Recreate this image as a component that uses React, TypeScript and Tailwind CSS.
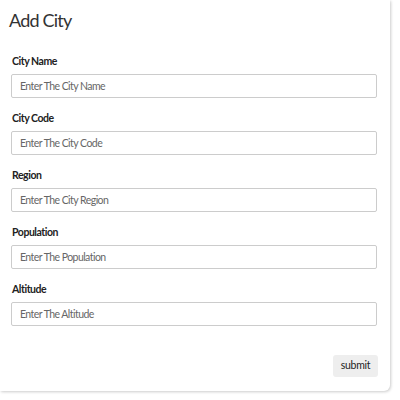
import React from 'react';

const fields = [
  { label: 'City Name', placeholder: 'Enter The City Name' },
  { label: 'City Code', placeholder: 'Enter The City Code' },
  { label: 'Region', placeholder: 'Enter The City Region' },
  { label: 'Population', placeholder: 'Enter The Population' },
  { label: 'Altitude', placeholder: 'Enter The Altitude' },
];

export default function App() {
  return (
    <div className="bg-white min-h-screen" style={{ fontFamily: 'Lato, "Open Sans", sans-serif' }}>
      <div className="w-[390px] h-[391px] bg-white rounded-br-md shadow-[1px_1px_3px_rgba(0,0,0,0.2)] flex flex-col">
        <h1 className="text-[18px] leading-[24px] tracking-[-0.8px] text-[#333] pl-[9px] pt-[8px] h-[53px]">Add City</h1>
        <div className="flex flex-col gap-[12px] pl-[11px] pr-[13px]">
          {fields.map((f) => (
            <div key={f.label} className="flex flex-col">
              <label className="text-[10.5px] leading-[16px] tracking-[-0.45px] font-bold text-[#222] pl-[1px] mb-[5px]">{f.label}</label>
              <input
                className="h-[24px] border border-[#ccc] rounded-[2px] px-[8px] text-[10.5px] tracking-[-0.55px] text-[#333] placeholder:text-[#666] outline-none"
                placeholder={f.placeholder}
              />
            </div>
          ))}
        </div>
        <div className="flex justify-end pr-[12px] mt-[29px]">
          <button className="w-[45px] h-[22px] bg-[#eeeeee] rounded-[3px] text-[10.5px] tracking-[-0.3px] text-[#222]">submit</button>
        </div>
      </div>
    </div>
  );
}
